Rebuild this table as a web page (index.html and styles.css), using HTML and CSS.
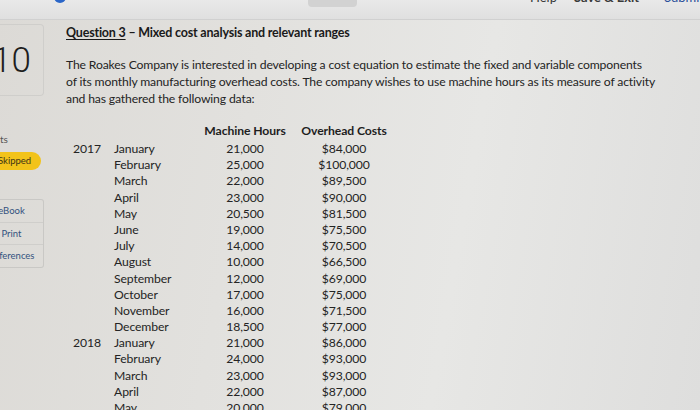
FILE: index.html
```html
<!DOCTYPE html>
<html>
<head>
<meta charset="utf-8">
<link rel="stylesheet" href="styles.css">
</head>
<body>
<div class="topbar">
  <div class="topbar-inner">
    <span class="dot"></span>
    <span class="greybtn"></span>
    <span class="toplink help">Help</span>
    <span class="toplink save">Save &amp; Exit</span>
    <span class="toplink submit">Submit</span>
  </div>
</div>
<div class="page">
  <aside class="sidebar">
    <div class="qnum">10</div>
    <div class="points">ts</div>
    <div class="skipped">Skipped</div>
    <div class="tools">
      <div class="tool">eBook</div>
      <div class="tool">Print</div>
      <div class="tool">References</div>
    </div>
  </aside>
  <main class="main">
    <h1 class="title"><span class="qlabel">Question 3</span> – Mixed cost analysis and relevant ranges</h1>
    <p class="intro">The Roakes Company is interested in developing a cost equation to estimate the fixed and variable components<br>of its monthly manufacturing overhead costs. The company wishes to use machine hours as its measure of activity<br>and has gathered the following data:</p>
    <div class="table">
      <div class="th"></div><div class="th"></div><div class="th c">Machine Hours</div><div class="th c">Overhead Costs</div>
      <div>2017</div><div>January</div><div class="c">21,000</div><div class="c">$84,000</div>
      <div></div><div>February</div><div class="c">25,000</div><div class="c">$100,000</div>
      <div></div><div>March</div><div class="c">22,000</div><div class="c">$89,500</div>
      <div></div><div>April</div><div class="c">23,000</div><div class="c">$90,000</div>
      <div></div><div>May</div><div class="c">20,500</div><div class="c">$81,500</div>
      <div></div><div>June</div><div class="c">19,000</div><div class="c">$75,500</div>
      <div></div><div>July</div><div class="c">14,000</div><div class="c">$70,500</div>
      <div></div><div>August</div><div class="c">10,000</div><div class="c">$66,500</div>
      <div></div><div>September</div><div class="c">12,000</div><div class="c">$69,000</div>
      <div></div><div>October</div><div class="c">17,000</div><div class="c">$75,000</div>
      <div></div><div>November</div><div class="c">16,000</div><div class="c">$71,500</div>
      <div></div><div>December</div><div class="c">18,500</div><div class="c">$77,000</div>
      <div>2018</div><div>January</div><div class="c">21,000</div><div class="c">$86,000</div>
      <div></div><div>February</div><div class="c">24,000</div><div class="c">$93,000</div>
      <div></div><div>March</div><div class="c">23,000</div><div class="c">$93,000</div>
      <div></div><div>April</div><div class="c">22,000</div><div class="c">$87,000</div>
      <div></div><div>May</div><div class="c">20,000</div><div class="c">$79,000</div>
    </div>
  </main>
</div>
</body>
</html>
```
FILE: styles.css
```css
html, body {
  margin: 0;
  padding: 0;
  width: 700px;
  height: 410px;
  overflow: hidden;
}
body {
  background: linear-gradient(100deg, #dcdad6 0%, #e2e1de 35%, #e7e7e5 65%, #dededd 100%);
  font-family: "Lato", "Open Sans", sans-serif;
  color: #222;
}
.topbar {
  height: 19px;
  overflow: hidden;
  background: linear-gradient(180deg, #e9e9e9, #dfdfdf);
  border-bottom: 1px solid #d0d0d0;
}
.topbar-inner {
  display: flex;
  align-items: flex-start;
  margin-top: -10px;
  height: 20px;
  white-space: nowrap;
}
.topbar-inner > span {
  flex: none;
}
.dot {
  width: 12px;
  height: 12px;
  border-radius: 50%;
  background: #2a66c8;
  margin-left: 54px;
  margin-top: 1px;
}
.greybtn {
  width: 49px;
  height: 17px;
  border-radius: 4px;
  background: #d2d2d2;
  margin-left: 242px;
}
.toplink {
  font-size: 13px;
  font-weight: 700;
  color: #3a3a3a;
  line-height: 14px;
}
.help { margin-left: 173px; font-weight: 400; }
.save { margin-left: 17px; }
.submit { margin-left: 25px; color: #2a4f9a; font-weight: 400; }

.page {
  display: flex;
}
.sidebar {
  width: 44px;
  flex: none;
  padding-top: 4px;
}
.qnum {
  height: 72px;
  border: 1px solid #cfcecb;
  border-left: none;
  border-radius: 0 4px 4px 0;
  font-family: "Roboto", sans-serif;
  font-size: 35px;
  font-weight: 300;
  color: #1e1e1e;
  line-height: 34px;
  padding-top: 19px;
  box-sizing: border-box;
  margin-left: -18px;
  padding-left: 10px;
}
.points {
  margin-top: 37px;
  font-size: 10px;
  color: #555;
  line-height: 12px;
}
.skipped {
  margin-top: 7px;
  width: 41px;
  height: 18px;
  background: #f2c31a;
  border-radius: 0 9px 9px 0;
  font-size: 9.5px;
  line-height: 18px;
  color: #3d3414;
  text-indent: -2px;
  overflow: hidden;
}
.tools {
  margin-top: 29px;
  margin-left: -20px;
  border: 1px solid #c9c8c5;
  border-left: none;
  border-radius: 0 3px 3px 0;
  overflow: hidden;
}
.tool {
  height: 21.5px;
  line-height: 21px;
  font-size: 9.5px;
  color: #33527e;
  text-align: center;
  border-top: 1px solid #cfcecb;
  white-space: nowrap;
}
.tool:first-child { border-top: none; }

.main {
  padding-left: 22px;
  padding-top: 5px;
}
.title {
  margin: 0;
  font-size: 12.5px;
  font-weight: 700;
  color: #1a1a1a;
  line-height: 16px;
  letter-spacing: -0.2px;
}
.qlabel {
  text-decoration: underline;
  text-underline-offset: 2px;
}
.intro {
  margin: 15px 0 0 0;
  width: 610px;
  white-space: nowrap;
  font-size: 12.2px;
  line-height: 17px;
  color: #242424;
  letter-spacing: -0.15px;
}
.table {
  display: grid;
  grid-template-columns: 41px 90px 82px 116px;
  grid-template-rows: 18px;
  grid-auto-rows: 16.2px;
  margin-top: 16px;
  margin-left: 7px;
  font-size: 12.2px;
  line-height: 16.2px;
  color: #242424;
  letter-spacing: -0.1px;
}
.table .th {
  font-weight: 700;
  color: #1e1e1e;
}
.c {
  text-align: center;
  white-space: nowrap;
}
```
